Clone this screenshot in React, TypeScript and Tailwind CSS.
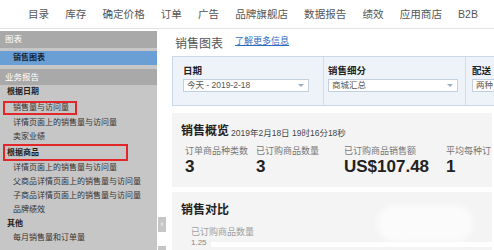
import React from "react";

const navItems = ["目录", "库存", "确定价格", "订单", "广告", "品牌旗舰店", "数据报告", "绩效", "应用商店", "B2B"];

const font = "font-['Liberation_Sans','Noto_Sans_CJK_SC',sans-serif]";

function SideRow({ children, bold, h = "h-[14px]" }: { children: React.ReactNode; bold?: boolean; h?: string }) {
  return (
    <div
      className={`${h} flex items-center whitespace-nowrap text-[8px] leading-none ${
        bold ? "pl-[7px] font-bold text-[#1e1e1e]" : "pl-[13px] text-[#333]"
      }`}
    >
      {children}
    </div>
  );
}

function Dropdown({ value, width }: { value: string; width: string }) {
  return (
    <div className={`${width} h-[13px] bg-white border border-[#c3cfdc] flex items-center justify-between pl-[3px] pr-[4px] shrink-0`}>
      <span className="text-[8.5px] leading-none text-[#555] whitespace-nowrap">{value}</span>
      <span className="w-0 h-0 border-l-[3px] border-r-[3px] border-t-[3px] border-l-transparent border-r-transparent border-t-[#9bb0c8]" />
    </div>
  );
}

function Metric({ label, value, w }: { label: string; value: string; w: string }) {
  return (
    <div className={`${w} flex flex-col shrink-0`}>
      <span className="text-[9px] leading-none text-[#777] whitespace-nowrap">{label}</span>
      <span className="text-[17px] leading-none font-bold text-[#222] mt-[2px] whitespace-nowrap">{value}</span>
    </div>
  );
}

export default function App() {
  return (
    <div className={`relative w-[494px] h-[250px] overflow-hidden bg-white ${font}`}>
      {/* Top navigation */}
      <div className="h-[29px] border-b border-[#e2e2e2] flex items-center pl-[28px] gap-[16px]">
        {navItems.map((item) => (
          <span key={item} className="text-[10.6px] leading-none text-[#555] whitespace-nowrap">
            {item}
          </span>
        ))}
      </div>

      <div className="flex h-[221px]">
        {/* Sidebar */}
        <div className="w-[157px] mt-[2px] bg-[#c6c6c6] flex flex-col shrink-0">
          <div className="h-[17px] bg-[#a9a9a9] flex items-center pl-[5px] text-[8.5px] text-white leading-none">图表</div>
          <div className="h-[3px]" />
          <div className="h-[14px] bg-[#6a9fd5] flex items-center pl-[13px] text-[8px] leading-none font-bold text-[#142238]">销售图表</div>
          <div className="h-[4px]" />
          <div className="h-[16px] bg-[#a9a9a9] flex items-center pl-[5px] text-[8.5px] text-white leading-none">业务报告</div>
          <SideRow bold>根据日期</SideRow>
          <div className="h-[2px]" />
          <div className="h-[14px] ml-[3px] w-[74px] border-2 border-[#e3262a] flex items-center pl-[8px] text-[8px] leading-none text-[#333] whitespace-nowrap">
            销售量与访问量
          </div>
          <SideRow h="h-[15px]">详情页面上的销售量与访问量</SideRow>
          <SideRow>卖家业绩</SideRow>
          <div className="h-[17px] ml-[3px] w-[125px] border-2 border-[#e3262a] flex items-center pl-[2px] text-[8px] leading-none font-bold text-[#1e1e1e]">
            根据商品
          </div>
          <SideRow>详情页面上的销售量与访问量</SideRow>
          <SideRow>父商品详情页面上的销售量与访问量</SideRow>
          <SideRow>子商品详情页面上的销售量与访问量</SideRow>
          <SideRow>品牌绩效</SideRow>
          <SideRow bold>其他</SideRow>
          <SideRow>每月销售量和订单量</SideRow>
        </div>

        {/* Main */}
        <div className="flex-1 pl-[15px] flex flex-col min-w-0">
          <div className="h-[27px] flex items-center gap-[12px] pl-[3px] pt-[2px] shrink-0">
            <span className="text-[12px] leading-none text-[#555]">销售图表</span>
            <span className="text-[9px] leading-none text-[#2a6cc4] underline -mt-[5px]">了解更多信息</span>
          </div>

          {/* Filters */}
          <div className="h-[50px] w-[380px] bg-[#eef3f9] border-[1.5px] border-[#c9d8e8] flex shrink-0">
            <div className="w-[151px] shrink-0 border-r border-[#d3dde8] pl-[10px] pt-[9px] flex flex-col gap-[3px]">
              <span className="text-[9.5px] leading-none font-bold text-[#222]">日期</span>
              <Dropdown value="今天 - 2019-2-18" width="w-[126px]" />
            </div>
            <div className="w-[142px] shrink-0 border-r border-[#d3dde8] pl-[4px] pt-[9px] flex flex-col gap-[3px]">
              <span className="text-[9.5px] leading-none font-bold text-[#222]">销售细分</span>
              <Dropdown value="商城汇总" width="w-[130px]" />
            </div>
            <div className="flex-1 pl-[6px] pt-[9px] flex flex-col gap-[3px]">
              <span className="text-[9.5px] leading-none font-bold text-[#222] whitespace-nowrap">配送</span>
              <Dropdown value="两种" width="w-[60px]" />
            </div>
          </div>

          {/* Sales overview */}
          <div className="mt-[7px] h-[74px] w-[320px] bg-[#f4f4f4] pl-[9px] pt-[12px] shrink-0">
            <div className="flex items-end gap-[2px]">
              <span className="text-[12px] leading-none font-bold text-[#222]">销售概览</span>
              <span className="text-[8.5px] leading-none text-[#444] whitespace-nowrap">2019年2月18日 19时16分18秒</span>
            </div>
            <div className="flex mt-[10px] pl-[4px]">
              <Metric label="订单商品种类数" value="3" w="w-[71px]" />
              <Metric label="已订购商品数量" value="3" w="w-[88px]" />
              <Metric label="已订购商品销售额" value="US$107.48" w="w-[102px]" />
              <Metric label="平均每种订" value="1" w="w-[50px]" />
            </div>
          </div>

          {/* Sales comparison */}
          <div className="relative mt-[5px] flex-1 w-[320px] bg-[#f4f4f4] pl-[9px] pt-[12px] flex flex-col">
            <span className="text-[12px] leading-none font-bold text-[#222]">销售对比</span>
            <span className="mt-[12px] ml-[10px] text-[9px] leading-none text-[#a0a0a0]">已订购商品数量</span>
            <div className="flex items-end mt-[2px] ml-[10px]">
              <span className="text-[8px] leading-none text-[#888]">1.25</span>
              <div className="flex-1 ml-[4px] h-[5px] bg-white" />
            </div>
            <div className="absolute left-[205px] top-[13px] w-[96px] h-[37px] rounded-full bg-[#fbfbfb] blur-[3px]" />
          </div>
        </div>
      </div>

      {/* Sidebar collapse tabs */}
      <div className="absolute left-[158px] top-[217px] w-[8px] h-[15px] bg-[#c6c6c6] flex items-center justify-center text-[9px] leading-none text-white">‹</div>
      <div className="absolute left-[158px] top-[246px] w-[8px] h-[6px] bg-[#c6c6c6]" />
    </div>
  );
}
